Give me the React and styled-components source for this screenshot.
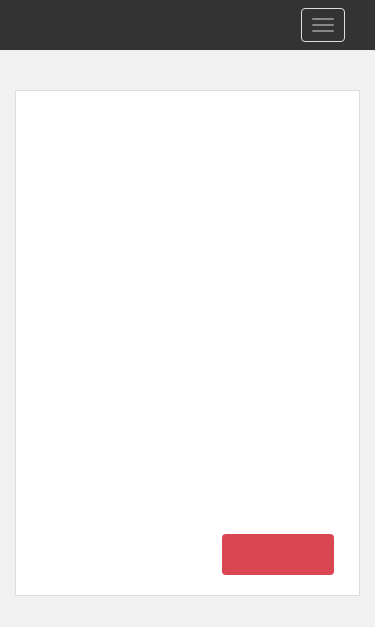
import React from 'react';
import styled, { createGlobalStyle } from 'styled-components';

const GlobalStyle = createGlobalStyle`
  html, body {
    margin: 0;
    padding: 0;
    background-color: #f1f1f1;
    font-family: "Liberation Sans", Arial, sans-serif;
  }
`;

const Page = styled.div`
  min-height: 3420px;
  background-color: #f1f1f1;
`;

const Navbar = styled.nav`
  height: 50px;
  background-color: #333333;
  display: flex;
  align-items: center;
  justify-content: flex-end;
  padding: 0 30px 0 15px;
  box-sizing: border-box;
`;

const Toggle = styled.button`
  width: 44px;
  height: 34px;
  box-sizing: border-box;
  background: transparent;
  border: 1px solid #dddddd;
  border-radius: 4px;
  padding: 9px 10px;
  display: flex;
  flex-direction: column;
  justify-content: space-between;
  align-items: center;
  cursor: pointer;
`;

const Bar = styled.span`
  display: block;
  width: 22px;
  height: 2px;
  border-radius: 1px;
  background-color: #888888;
`;

const Main = styled.main`
  padding: 40px 15px;
`;

const Card = styled.section`
  height: 506px;
  background-color: #ffffff;
  border: 1px solid #dddddd;
  box-sizing: border-box;
  display: flex;
  align-items: flex-end;
  justify-content: flex-end;
  padding: 0 25px 20px 0;
`;

const DangerButton = styled.button`
  width: 112px;
  height: 41px;
  border: none;
  border-radius: 4px;
  background-color: #da4552;
  cursor: pointer;
`;

const App = () => {
  return (
    <>
      <GlobalStyle />
      <Page>
        <Navbar>
          <Toggle aria-label="Toggle navigation">
            <Bar />
            <Bar />
            <Bar />
          </Toggle>
        </Navbar>
        <Main>
          <Card>
            <DangerButton aria-label="Delete" />
          </Card>
        </Main>
      </Page>
    </>
  );
};

export default App;
